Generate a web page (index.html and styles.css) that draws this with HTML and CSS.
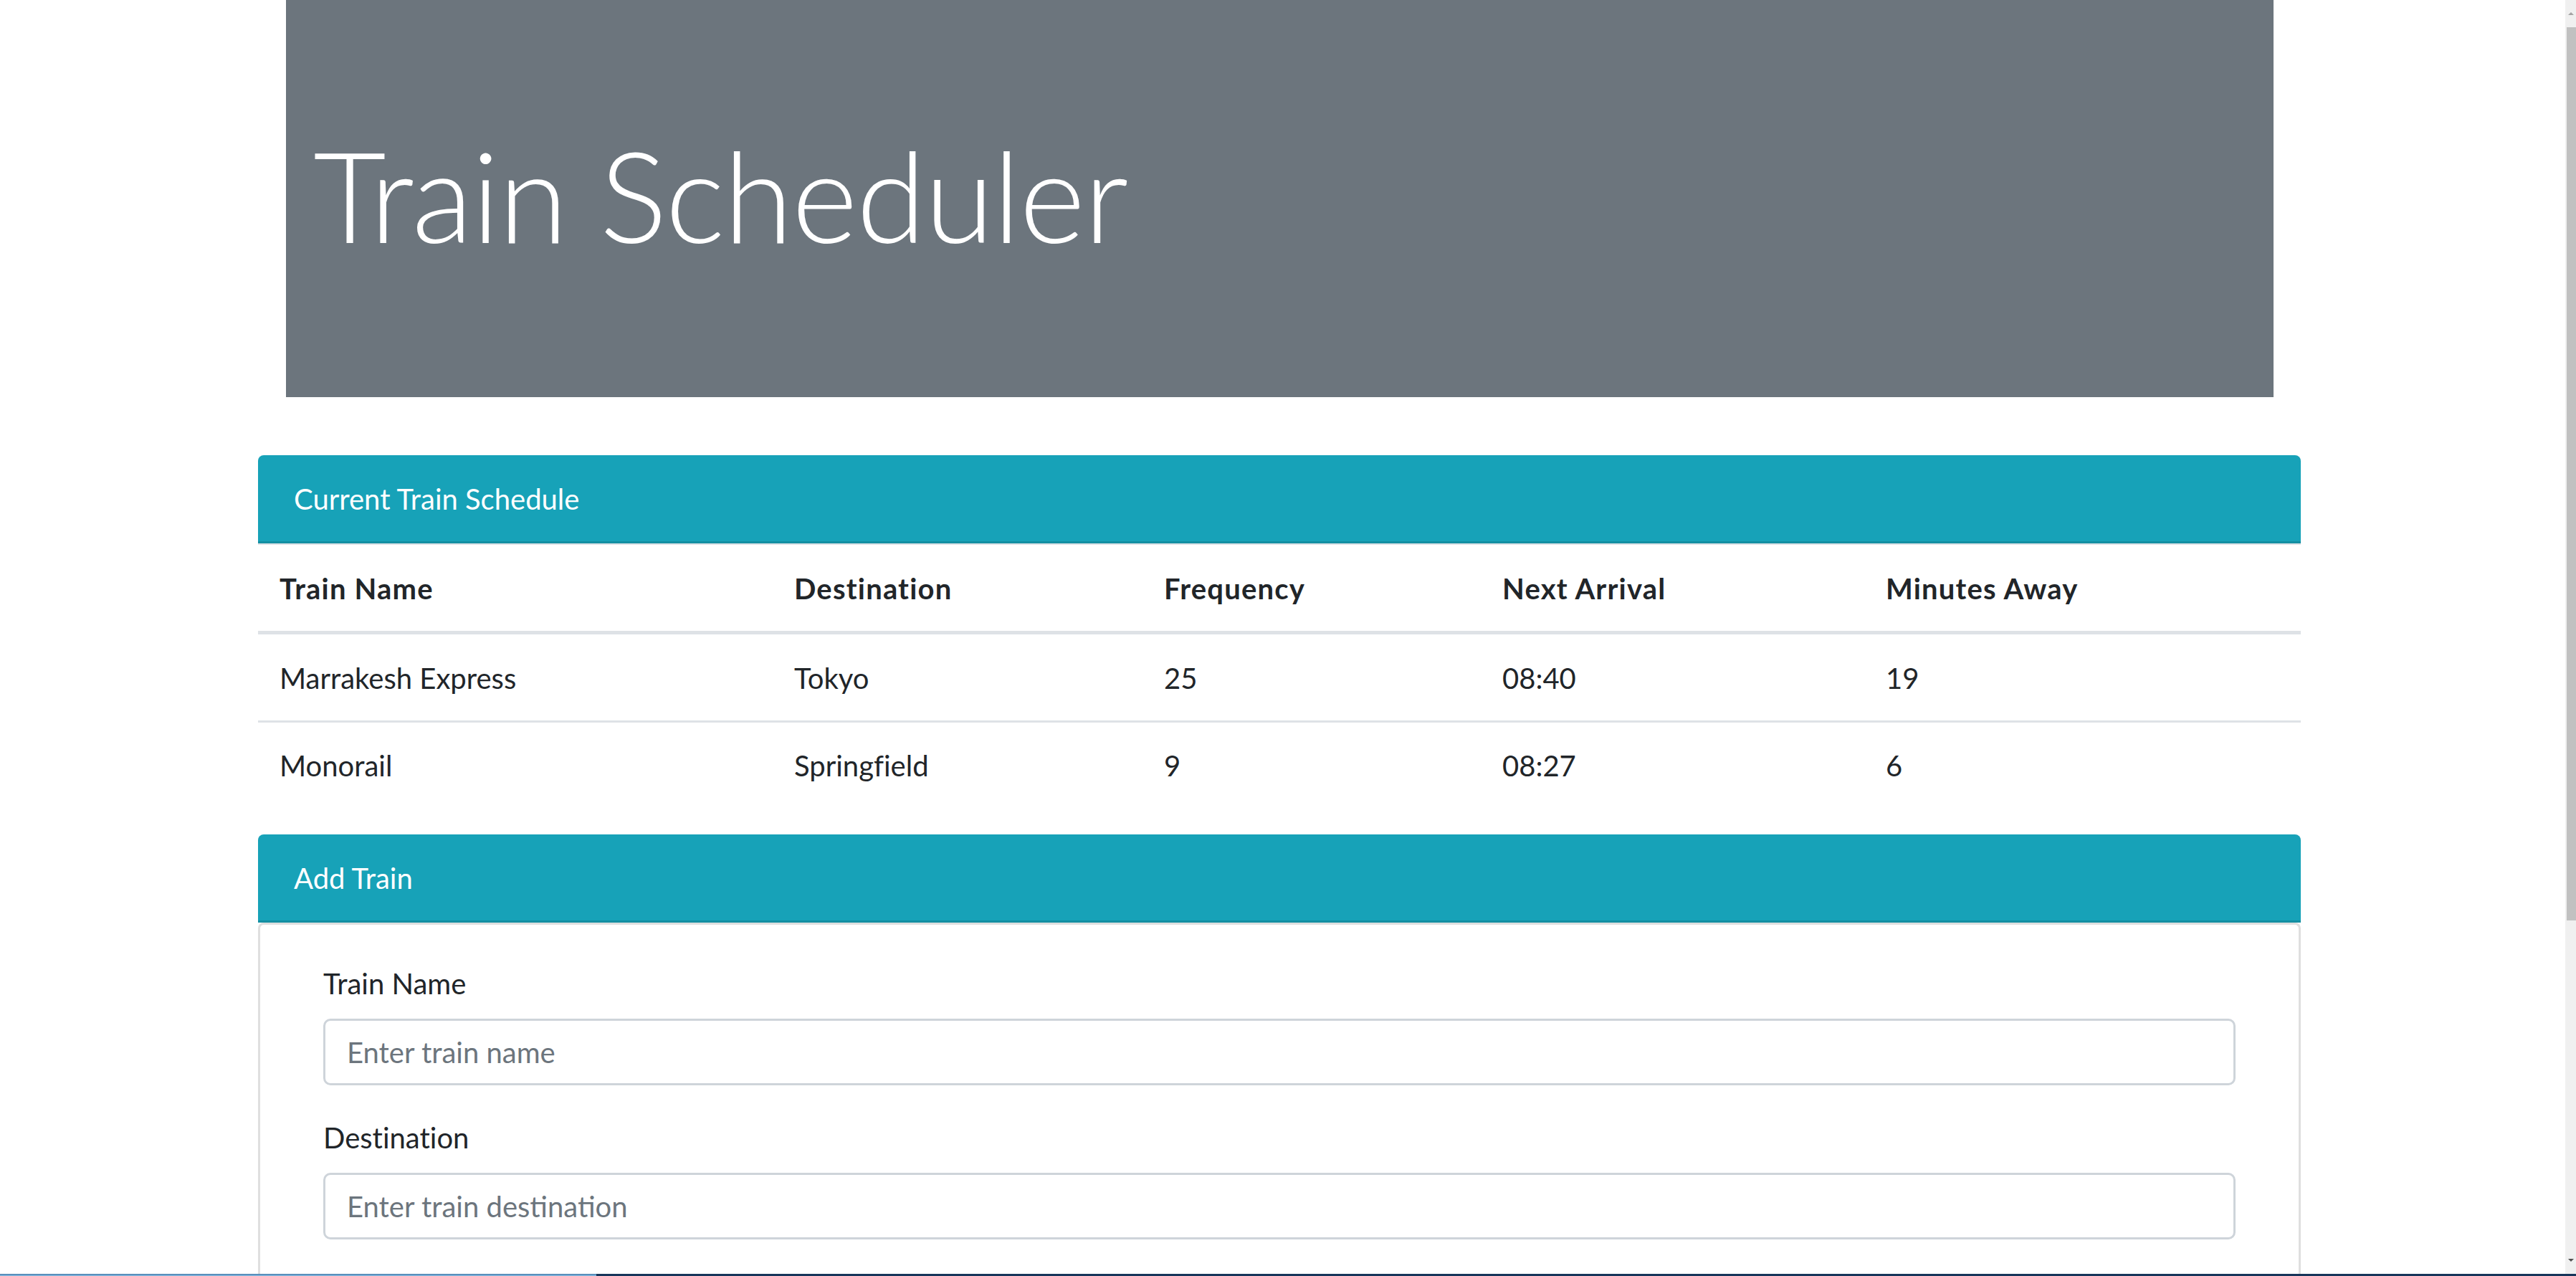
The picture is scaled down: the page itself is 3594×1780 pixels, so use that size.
FILE: index.html
```html
<!DOCTYPE html>
<html lang="en">
<head>
<meta charset="utf-8">
<title>Train Scheduler</title>
<link rel="stylesheet" href="styles.css">
</head>
<body>
<div class="container">
  <header class="jumbotron">
    <h1 class="display">Train Scheduler</h1>
  </header>

  <section class="card schedule">
    <div class="card-header">Current Train Schedule</div>
    <table class="table">
      <colgroup>
        <col class="c-name">
        <col class="c-dest">
        <col class="c-freq">
        <col class="c-next">
        <col class="c-away">
      </colgroup>
      <thead>
        <tr>
          <th>Train Name</th>
          <th>Destination</th>
          <th>Frequency</th>
          <th>Next Arrival</th>
          <th>Minutes Away</th>
        </tr>
      </thead>
      <tbody>
        <tr>
          <td>Marrakesh Express</td>
          <td>Tokyo</td>
          <td>25</td>
          <td>08:40</td>
          <td>19</td>
        </tr>
        <tr>
          <td>Monorail</td>
          <td>Springfield</td>
          <td>9</td>
          <td>08:27</td>
          <td>6</td>
        </tr>
      </tbody>
    </table>
  </section>

  <section class="card add">
    <div class="card-header">Add Train</div>
    <div class="card-body">
      <form class="form">
        <div class="form-group">
          <label class="label" for="train-name">Train Name</label>
          <input class="form-control" id="train-name" type="text" placeholder="Enter train name">
        </div>
        <div class="form-group">
          <label class="label" for="destination">Destination</label>
          <input class="form-control" id="destination" type="text" placeholder="Enter train destination">
        </div>
      </form>
    </div>
  </section>
</div>

<div class="scrollbar">
  <div class="scroll-arrow up"></div>
  <div class="scroll-thumb"></div>
  <div class="scroll-arrow down"></div>
</div>
<div class="taskbar-edge">
  <div class="edge-light"></div>
  <div class="edge-dark"></div>
</div>
</body>
</html>
```

FILE: styles.css
```css
html, body {
  margin: 0;
  padding: 0;
  height: 1780px;
  overflow: hidden;
  background: #ffffff;
}

body {
  font-family: Lato, "Open Sans", "Noto Sans", sans-serif;
  font-size: 40px;
  line-height: 60px;
  color: #212529;
  font-variant-ligatures: none;
}

.container {
  width: 2850px;
  margin-left: 360px;
}

/* Jumbotron */
.jumbotron {
  background: #6c757d;
  margin: 0 38px 81px 39px;
  padding: 163px 38px 155px 38px;
}

.display {
  margin: 0 0 20px 0;
  font-size: 176px;
  line-height: 216px;
  font-weight: 300;
  letter-spacing: -1.7px;
  color: #ffffff;
}

/* Cards */
.card-header {
  background: #17a2b8;
  color: #ffffff;
  padding: 31px 50px 29px 50px;
  line-height: 60px;
  border-bottom: 3px solid #148fa2;
  border-radius: 8px 8px 0 0;
}

.schedule {
  margin-bottom: 37px;
}

/* Table */
.table {
  width: 100%;
  border-collapse: separate;
  border-spacing: 0;
  table-layout: fixed;
}

.c-name { width: 718px; }
.c-dest { width: 516px; }
.c-freq { width: 472px; }
.c-next { width: 535px; }
.c-away { width: 609px; }

.table th,
.table td {
  text-align: left;
  padding: 31px 30px 29px 30px;
  vertical-align: top;
  white-space: nowrap;
}

.table th {
  font-weight: 700;
  letter-spacing: 1.2px;
  border-top: 2px solid #dee2e6;
  border-bottom: 5px solid #dee2e6;
}

.table tbody tr + tr td {
  border-top: 3px solid #dee2e6;
  padding-top: 30px;
}

/* Add train form */
.card-body {
  border: 3px solid #dfdfdf;
  border-bottom: none;
  border-radius: 8px 8px 0 0;
  padding: 51px 88px 0 88px;
  height: 600px;
}

.form-group {
  margin-bottom: 42px;
}

.label {
  display: block;
  margin-bottom: 19px;
  padding-top: 1px;
  line-height: 60px;
}

.form-control {
  display: block;
  box-sizing: border-box;
  width: 100%;
  height: 93px;
  padding: 0 30px;
  font-family: inherit;
  font-size: 40px;
  color: #495057;
  background: #ffffff;
  border: 3px solid #ced4da;
  border-radius: 10px;
  outline: none;
}

.form-control::placeholder {
  color: #6c757d;
  opacity: 1;
}

/* Browser chrome overlays */
.scrollbar {
  position: fixed;
  top: 0;
  right: 0;
  width: 15px;
  height: 1777px;
  background: #f0f0f0;
  display: flex;
  flex-direction: column;
}

.scroll-arrow {
  height: 38px;
  position: relative;
}

.scroll-arrow.up::after,
.scroll-arrow.down::after {
  content: "";
  position: absolute;
  left: 4px;
  width: 0;
  height: 0;
  border-left: 4px solid transparent;
  border-right: 4px solid transparent;
}

.scroll-arrow.up::after {
  top: 17px;
  border-bottom: 4px solid #a3a3a3;
}

.scroll-arrow.down {
  margin-top: auto;
}

.scroll-arrow.down::after {
  top: 17px;
  border-top: 4px solid #505050;
}

.scroll-thumb {
  height: 1246px;
  margin-left: 2px;
  background: #c1c1c1;
}

.taskbar-edge {
  position: fixed;
  left: 0;
  right: 0;
  bottom: 0;
  height: 3px;
  display: flex;
}

.edge-light {
  width: 832px;
  background: linear-gradient(#3e79a8, #8fbfe6);
}

.edge-dark {
  flex: 1;
  background: #17355a;
}
```
